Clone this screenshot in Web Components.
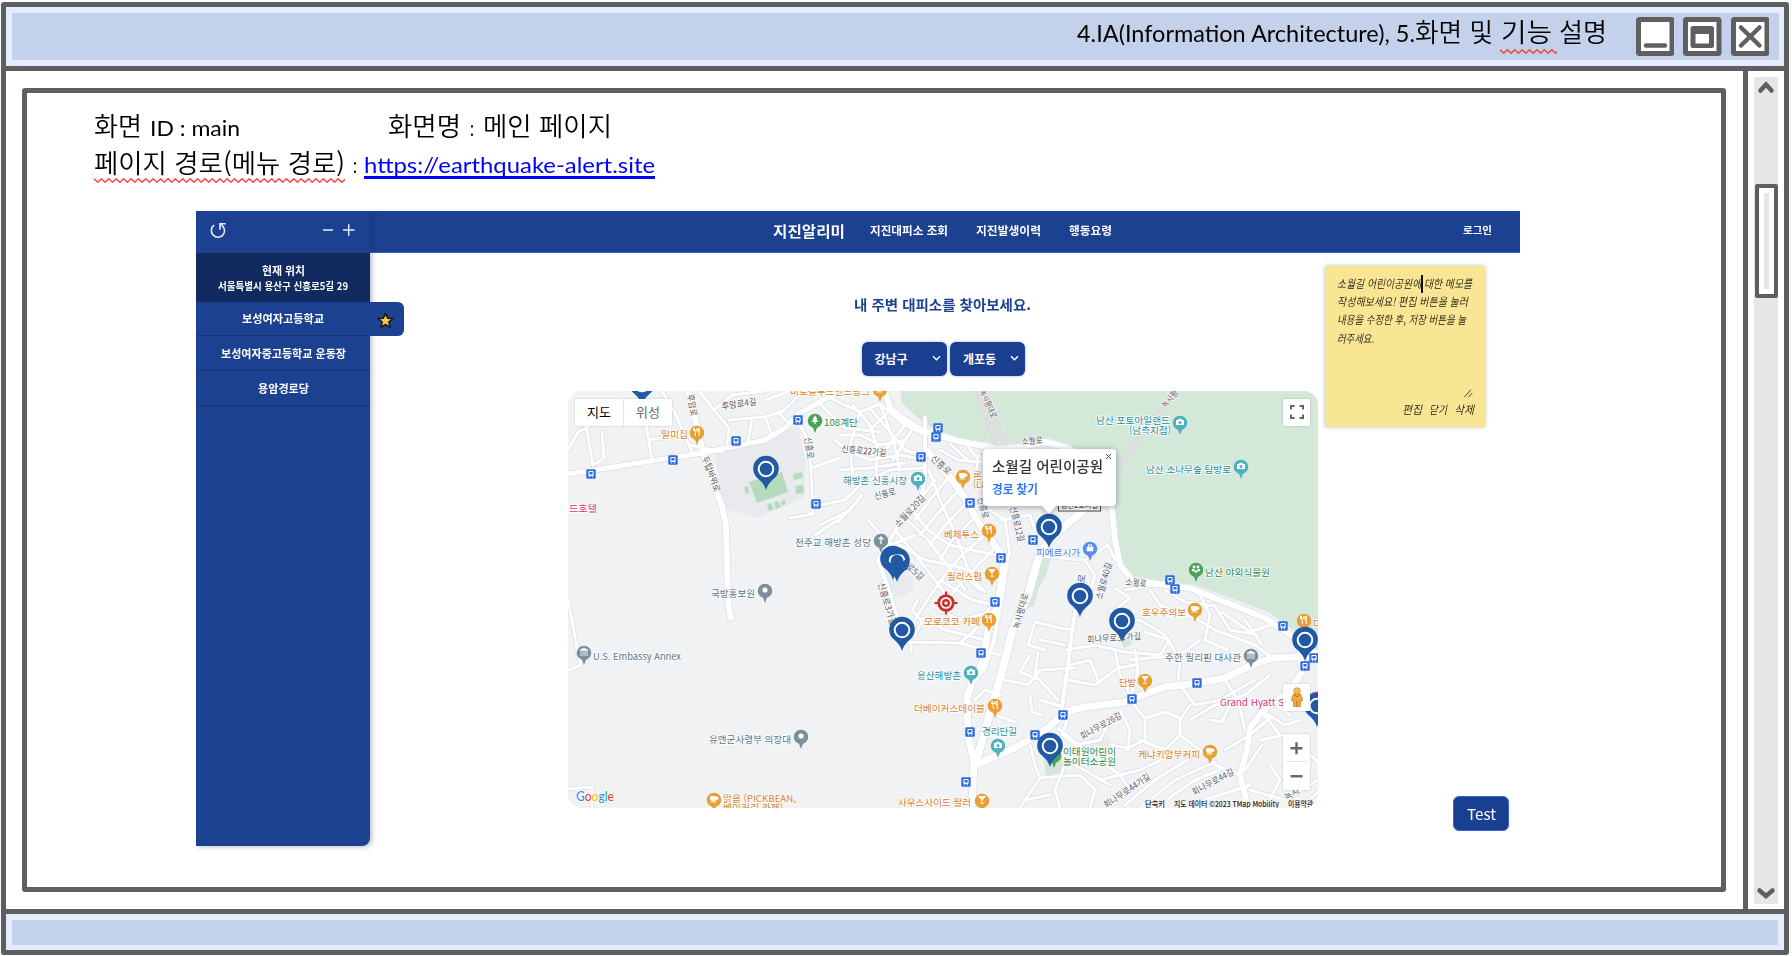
<!DOCTYPE html>
<html lang="ko">
<head>
<meta charset="utf-8">
<title>화면 설명 - 메인 페이지</title>
<style>
  html, body { margin: 0; height: 100%; overflow: hidden; }
  body { background: #f8faff; font-family: "Noto Sans CJK KR", "Noto Sans", sans-serif; }
</style>
</head>
<body>
<window-frame>
  <title-caption slot="title"></title-caption>
  <doc-meta></doc-meta>
  <quake-app></quake-app>
</window-frame>

<script>
const shadow = (el, html) => { el.attachShadow({ mode: "open" }).innerHTML = html; };
const define = (name, html) => customElements.define(name, class extends HTMLElement {
  constructor() { super(); shadow(this, html); }
});

/* ---------- window chrome ---------- */
define("window-frame", `
<style>
  :host { display: flex; flex-direction: column; box-sizing: border-box; width: 1788px; height: 953px; margin: 0; position: relative; left: 1px; top: 2px;
    border: 5px solid #5f5f5f; border-radius: 3px; background: #fff; }
  .bar { box-sizing: border-box; background: #c4d1eb; border: solid #e4ecfd; display: flex; align-items: center; justify-content: flex-end; flex: none; }
  .top { height: 59px; border-width: 6px 5px 6px 6px; }
  .bottom { height: 36px; border-width: 6px 6px 5px 6px; }
  .mid { flex: 1; display: flex; border: solid #5f5f5f; border-width: 5px 0; min-height: 0; }
  .page { flex: 1; padding: 17px 17px 17px 16px; display: flex; }
  .sheet { flex: 1; border: 5px solid #5f5f5f; border-radius: 3px; display: flex; flex-direction: column; min-width: 0; }
  window-buttons { margin-right: 10px; }
  slot[name=title] { display: block; }
</style>
<div class="bar top"><slot name="title"></slot><window-buttons></window-buttons></div>
<div class="mid"><div class="page"><div class="sheet"><slot></slot></div></div><scroll-track></scroll-track></div>
<div class="bar bottom"></div>`);

define("window-buttons", `
<style>
  :host { display: flex; gap: 9px; margin-left: 29px; }
  svg { display: block; width: 38.5px; height: 39px; }
</style>
<svg viewBox="0 0 38.5 39"><rect x="2.5" y="2.5" width="33.5" height="34" rx="1" fill="#fff" stroke="#5f5f5f" stroke-width="5"/><path d="M10 28.5H29" stroke="#5f5f5f" stroke-width="4.5" stroke-linecap="round"/></svg>
<svg viewBox="0 0 38.5 39"><rect x="2.5" y="2.5" width="33.5" height="34" rx="1" fill="#fff" stroke="#5f5f5f" stroke-width="5"/><rect x="7.5" y="9" width="23.5" height="22" rx="2.5" fill="#5f5f5f"/><rect x="12.5" y="17" width="13.5" height="9.5" fill="#fff"/></svg>
<svg viewBox="0 0 38.5 39"><rect x="2.5" y="2.5" width="33.5" height="34" rx="1" fill="#fff" stroke="#5f5f5f" stroke-width="5"/><path d="M10 10.500L28.5 28.500M28.5 10.500L10 28.500" stroke="#5f5f5f" stroke-width="4.5" stroke-linecap="round"/></svg>`);

define("scroll-track", `
<style>
  :host { display: flex; width: 36px; border-left: 5px solid #5f5f5f; padding: 6px 0 5px; justify-content: center; box-sizing: content-box; }
  .track { width: 24.5px; background: #e6e6e6; display: flex; flex-direction: column; align-items: center; margin-right: 0; }
  svg { width: 20px; height: 14px; flex: none; }
  .up { margin-top: 3px; } .down { margin-top: auto; margin-bottom: 3px; }
  .thumb { margin-top: 90px; box-sizing: border-box; width: 23px; height: 114px; flex: none; border: 4.5px solid #5f5f5f; background: #e6e6e6; box-shadow: inset 0 0 0 5px #fff; border-radius: 2px; }
</style>
<div class="track">
  <svg class="up" viewBox="0 0 20 14"><path d="M4.500 10.500L10 4.500L15.500 10.500" fill="none" stroke="#5f5f5f" stroke-width="4.500" stroke-linecap="round"/></svg>
  <div class="thumb"></div>
  <svg class="down" viewBox="0 0 20 14"><path d="M3.500 3.500L10 9L16.500 3.500" fill="none" stroke="#5f5f5f" stroke-width="4.500" stroke-linecap="round"/></svg>
</div>`);

/* Red spell-check wave under its content */
customElements.define("spell-mark", class extends HTMLElement {
  constructor() {
    super();
    shadow(this, `<style>
      :host { display: inline-block; position: relative; }
      svg { position: absolute; left: 0; bottom: var(--drop, 0px); width: 100%; height: 5px; overflow: hidden; }
    </style><slot></slot><svg><defs><pattern id="w" width="7.4" height="5" patternUnits="userSpaceOnUse"><path d="M-.5 .3L3.700 4.200L7.900 .3" fill="none" stroke="#ee4036" stroke-width="1.400"/></pattern></defs><rect width="100%" height="5" fill="url(#w)"/></svg>`);
  }
});

const docText = `
  .row { display: flex; align-items: baseline; color: #000; font-family: Lato, "Noto Sans CJK KR", sans-serif; line-height: 32px; height: 32px; white-space: nowrap; }
  .k { font-family: "Noto Sans CJK KR", sans-serif; font-size: 26px; font-weight: 350; }
  .l { font-size: 22px; }`;

define("title-caption", `
<style>${docText} :host { display: block; position: relative; top: -5.500px; } .l { font-size: 23px; }
 spell-mark { --drop: -2px; width: 57px; }</style>
<div class="row"><fit-text class="l" w="338">4.IA(Information Architecture), 5.</fit-text><fit-text class="k" w="78">화면 및</fit-text><spell-mark style="margin:0 2px 0 7px"><fit-text class="k" w="51" style="margin-left:1px">기능</fit-text></spell-mark><fit-text class="k" w="48">설명</fit-text></div>`);

define("doc-meta", `
<style>${docText}
  :host { display: block; padding: 15.500px 0 0 67px; height: 102px; box-sizing: border-box; }
  .second { margin-top: 5px; }
  a { color: #0000f5; text-decoration: none; border-bottom: 3px solid #0000f5; line-height: 23px; display: inline-block; height: 23px; }
  spell-mark { --drop: 0px; }
</style>
<div class="row"><fit-text class="k" w="48">화면</fit-text><fit-text class="l" w="90" style="margin-left:8px">ID : main</fit-text><fit-text class="k" w="73" style="margin-left:148px">화면명</fit-text><fit-text class="l" w="4" style="margin:0 9px 0 9px">:</fit-text><fit-text class="k" w="129">메인 페이지</fit-text></div>
<div class="row second"><spell-mark><fit-text class="k" w="251">페이지 경로(메뉴 경로)</fit-text></spell-mark><fit-text class="l" w="4" style="margin:0 7px 0 8px">:</fit-text><a href="#"><fit-text class="l" w="291">https://earthquake-alert.site</fit-text></a></div>`);

/* ---------- application ---------- */
define("quake-app", `
<style>
  :host { display: flex; position: relative; width: 1324px; height: 635px; margin-left: 169px; margin-top: 16px; background: #fff; }
  .main { flex: 1; display: flex; flex-direction: column; min-width: 0; }
  .body { display: flex; flex-direction: column; align-items: center; padding-left: 198px; width: 750px; }
  h1 { margin: 37px 0 0; height: 28px; line-height: 28px; font-size: 14px; color: #1c4190; font-weight: 700; align-self: flex-start; padding-left: 285.500px; }
  .picks { display: flex; gap: 3px; margin: 24px 0 15px; align-self: flex-start; padding-left: 293.500px; }
  side-list { z-index: 2; }
  memo-note { position: absolute; left: 1129px; top: 55px; }
  .test { position: absolute; left: 1257px; top: 585px; width: 56px; height: 35px; box-sizing: border-box; background: #1a3f91; border: 1px solid #2f66d8; border-radius: 6px; color: #fff; font: 400 15px/32px "Noto Sans CJK KR", sans-serif; padding: 0 0 0 13px; text-align: left; }
</style>
<side-list></side-list>
<div class="main">
  <app-nav></app-nav>
  <div class="body">
    <h1><fit-text w="177">내 주변 대피소를 찾아보세요.</fit-text></h1>
    <div class="picks"><drop-pick style="width:85.500px">강남구</drop-pick><drop-pick style="width:75px">개포동</drop-pick></div>
    <shelter-map></shelter-map>
  </div>
</div>
<memo-note></memo-note>
<button class="test"><fit-text w="29">Test</fit-text></button>`);

define("side-list", `
<style>
  :host { display: flex; flex-direction: column; width: 174px; height: 635px; background: #1c4190; border-radius: 0 0 8px 0; box-shadow: 2px 1px 5px rgba(20,40,90,.3); color: #fff; font-weight: 700; flex: none; clip-path: inset(0 -40px -10px 0); }
  .tools { height: 42px; display: flex; align-items: center; padding: 0 15px 4px 14px; box-sizing: border-box; }
  .tools svg { display: block; }
  .gap { flex: 1; }
  .here { height: 48.500px; background: #112a5f; display: flex; flex-direction: column; align-items: center; box-sizing: border-box; padding-top: 10px; line-height: 15px; font-size: 11px; }
  .here fit-text + fit-text { font-size: 10px; }
  .item { height: 34.700px; display: flex; align-items: center; justify-content: center; box-sizing: border-box; border-bottom: 1px solid #15336f; font-size: 11px; position: relative; }
  .star { position: absolute; left: 173px; top: 0; width: 34.500px; height: 34px; background: #1c4190; border-radius: 0 6px 6px 0; display: flex; align-items: center; justify-content: center; padding: 4px 2px 0 0; box-sizing: border-box; }
</style>
<div class="tools">
  <svg width="16" height="17" viewBox="0 0 16 17"><path d="M4.200 3.200A6.600 6.600 0 1 0 12.200 3.600M10 7.800V1.800H15.600" fill="none" stroke="#e9eefa" stroke-width="1.600"/><path d="M10 2.200L13 2L10.600 5z" fill="#e9eefa"/></svg>
  <span class="gap"></span>
  <svg width="33" height="14" viewBox="0 0 33 14"><path d="M1 7H11M21 7H32.500M26.700 1.300V12.700" stroke="#e9eefa" stroke-width="1.500"/></svg>
</div>
<div class="here"><fit-text w="43">현재 위치</fit-text><fit-text w="130">서울특별시 용산구 신흥로5길 29</fit-text></div>
<div class="item"><fit-text w="82">보성여자고등학교</fit-text><span class="star"><svg width="17" height="17" viewBox="0 0 17 17"><path d="M8.500 1.400L10.600 6.200L15.800 6.600L11.800 10L13.100 15.400L8.500 12.500L3.900 15.400L5.200 10L1.200 6.600L6.400 6.200Z" fill="#f8c64a" stroke="#1a1a1a" stroke-width="1.500" stroke-linejoin="round"/></svg></span></div>
<div class="item"><fit-text w="125">보성여자중고등학교 운동장</fit-text></div>
<div class="item"><fit-text w="51">용암경로당</fit-text></div>`);

define("app-nav", `
<style>
  :host { display: flex; align-items: center; height: 42px; box-sizing: border-box; background: #1c4190; border-bottom: 1px solid #3b5fae; color: #fff; padding: 0 28px 3px 402.500px; font-weight: 700; font-size: 11.500px; }
  .logo { font-size: 14.500px; margin-right: 25px; }
  .links { display: flex; gap: 28px; flex: 1; }
  .login { font-size: 10.500px; position: relative; top: -1px; }
</style>
<fit-text class="logo" w="72">지진알리미</fit-text>
<div class="links"><fit-text w="78">지진대피소 조회</fit-text><fit-text w="65">지진발생이력</fit-text><fit-text w="43">행동요령</fit-text></div>
<fit-text class="login" w="29">로그인</fit-text>`);

define("drop-pick", `
<style>
  :host { display: flex; align-items: center; justify-content: space-between; height: 33.500px; box-sizing: border-box; padding: 0 6px 0 13px; background: #1a3f91; color: #fff; border-radius: 6px; font-size: 12px; font-weight: 700; box-shadow: 0 0 3px rgba(30,60,140,.4); }
</style>
<slot></slot><svg width="9" height="7" viewBox="0 0 9 7"><path d="M1 1.300L4.500 4.800L8 1.300" fill="none" stroke="#fff" stroke-width="1.400"/></svg>`);

define("memo-note", `
<style>
  :host { display: flex; flex-direction: column; box-sizing: border-box; width: 160px; height: 160.500px; background: #f9e694; box-shadow: 0 0 4px rgba(90,90,110,.4); padding: 7.500px 11px 9px 11.500px; color: #1d1a10; font-size: 11.500px; line-height: 18.400px; font-weight: 350; }
  .txt { flex: 1; position: relative; display: flex; flex-direction: column; }
  .txt fit-text { height: 18.400px; font-style: italic; }
  .caret { position: absolute; left: 84.500px; top: 1px; width: 1.700px; height: 18px; background: #111; }
  .grip { align-self: flex-end; display: block; margin-right: 1px; }
  .acts { display: flex; justify-content: flex-end; gap: 7px; height: 18px; margin-top: 2px; font-style: italic; }
</style>
<div class="txt"><fit-text w="135">소월길 어린이공원에 대한 메모를</fit-text><fit-text w="131">작성해보세요! 편집 버튼을 눌러</fit-text><fit-text w="129">내용을 수정한 후, 저장 버튼을 눌</fit-text><fit-text w="37">러주세요.</fit-text><span class="caret"></span></div>
<svg class="grip" width="9" height="9" viewBox="0 0 9 9"><path d="M.5 8L7 .5M4.500 8L8.300 4" stroke="#444" stroke-width="1"/></svg>
<div class="acts"><fit-text w="20">편집</fit-text><fit-text w="18">닫기</fit-text><fit-text w="20">삭제</fit-text></div>`);

/* ---------- map ---------- */
const parks = [
  "900,391 902,403 918,418 930,427 958,437 998,444 1022,443 1050,438 1075,448 1100,470 1114,505 1118,540 1123,563 1134,576 1165,581 1192,584 1228,597 1268,612 1300,635 1318,650 1318,391",
  "1042,560 1052,555 1046,575 1038,590 1034,606 1026,608 1030,590",
  "1043,757 1062,755 1063,772 1046,776", "1121,638 1131,638 1132,645 1124,648"];
const campus = ["715,452 798,427 806,465 804,498 757,518 722,508", "883,572 912,576 914,590 898,598 886,592", "1090,737 1110,737 1110,755 1090,755"];
const pitches = ["749,482 782,472 788,492 757,503","793,474 802,472 803,478 794,480","795,486 803,485 804,493 796,494","744,487 748,486 749,493 746,494","767,504 771,503 774,509 769,511","774,502 778,501 781,507 776,509","781,501 785,500 786,504 782,506"];
const roads = [
 [6,"885,391 890,408 902,418 925,432 958,441 998,449 1022,447 1045,442 1068,448 1085,460 1104,490 1112,510 1115,540 1120,565 1132,580 1165,585 1190,588 1225,602 1265,618 1298,640 1318,655"],
 [5,"568,474 645,462 702,453 765,440 785,428 798,414 825,399 845,391"],
 [6,"688,391 695,418 703,452 712,482 722,506 726,525 728,602 731,618"],
 [7,"928,452 948,475 965,498 982,528 1000,552 1004,565 998,605 988,630 983,662 972,682 967,698 968,735 974,762 972,808"],
 [8,"1110,482 1090,505 1060,530 1040,552 1028,595 1012,632 1002,672 992,705 982,742 975,764"],
 [7,"978,764 1015,748 1048,728 1065,712 1085,707 1125,702 1142,695 1165,687 1198,683 1225,678 1252,665 1272,658 1318,656"],
 [6,"1300,650 1302,672 1290,690 1262,712 1250,728 1247,750 1240,775 1248,808"],
 [4,"925,418 925,478 921,498 897,528 885,548 878,560 888,588 898,620"],
 [4,"1076,608 1072,630 1068,665 1063,698 1062,712"],[4,"1008,555 1003,590 994,640 985,668 972,684"],
 [3,"1115,560 1108,545 1085,560 1060,558 1042,556"],[3,"568,450 578,432 600,420 640,408"],[3,"585,420 593,465"],[3,"602,432 604,458 595,464"],[3,"645,418 652,460"],[3,"662,391 676,415 692,452"],[3,"648,440 682,435"],[3,"700,392 714,410 729,428 727,444"],[3,"690,445 722,452"],[3,"714,410 732,395 765,391"],[3,"729,420 765,417 783,411 800,395"],[3,"752,418 748,442"],[3,"765,417 772,435"],[3,"778,412 790,425"],[3,"765,400 790,391"],
 [3,"800,425 808,440 811,470 813,514 790,518"],[3,"811,468 840,458"],[3,"820,505 845,500 860,485 890,470 922,468"],[3,"840,435 860,435 880,445 905,440"],[3,"835,440 850,452 870,460 900,455 925,460"],[3,"853,405 870,425 878,450 875,485"],[3,"830,398 860,412 880,404 905,425 925,435"],[3,"818,402 845,428 880,432"],[3,"860,412 850,445 853,480"],[3,"870,408 905,450 922,455"],[3,"880,404 893,440 900,470"],[3,"890,410 870,430"],[3,"905,425 885,450"],[3,"915,425 893,460"],[3,"840,470 870,468 905,463"],[3,"820,525 850,510 862,495"],[3,"838,522 858,500"],[3,"815,535 845,515"],
 [3,"929,470 940,500 958,540 970,575 985,592"],[3,"935,480 912,510 928,530 950,545 1000,556"],[3,"905,518 928,540 945,562 965,590"],[3,"895,530 918,558 935,580 950,600"],[3,"948,478 930,500 915,520"],[3,"957,492 938,513 920,535"],[3,"965,505 945,525 930,545"],[3,"972,520 952,540 940,560"],[3,"985,535 962,555 945,575 930,596 916,618"],[3,"995,548 975,568 955,590 940,612"],[3,"880,552 900,545 925,560 955,566 998,580"],[3,"890,545 915,535"],[3,"868,520 890,545"],[3,"940,450 958,460 978,462 975,480 990,500"],[3,"950,444 970,462"],[3,"978,455 1000,470 1008,500 1020,545"],[3,"990,510 1005,520 1010,555"],[3,"1000,520 1030,515 1035,530"],[3,"965,442 980,462 1000,458"],
 [3,"918,600 912,610 922,622 915,635 902,640"],[3,"905,642 960,643 1000,655"],[3,"911,643 911,652"],[3,"930,605 960,620 990,612"],[3,"922,618 945,630 985,640"],[3,"960,643 975,630 995,600"],[3,"940,580 972,600 995,605"],[3,"958,570 980,590"],[3,"975,700 985,690 1000,695"],[3,"995,715 1015,722"],[3,"1005,680 1028,685 1040,670 1075,668"],[3,"1035,622 1060,628 1075,630"],[3,"1035,622 1028,645 1045,650"],[3,"1030,655 1020,672 1040,680"],[3,"1040,640 1065,645"],[3,"1038,652 1035,675 1058,700"],[3,"1030,695 1032,712 1042,715"],[3,"1040,700 1060,706"],
 [3,"1066,650 1095,645 1125,652 1160,655 1170,640 1145,632"],[3,"1068,680 1095,685 1118,668 1135,665"],[3,"1070,665 1090,660 1098,680"],[3,"1110,610 1120,622 1140,620 1165,635"],[3,"1085,560 1095,575 1088,600 1080,615"],[3,"1115,588 1130,598 1118,608"],[3,"1125,590 1155,585"],[3,"1150,590 1160,605 1195,618 1215,630 1255,645 1275,660"],[3,"1165,590 1185,602 1215,606 1230,630 1258,635"],[3,"1200,595 1210,615 1205,640 1228,650"],[3,"1135,650 1138,670 1130,700"],[3,"1115,650 1120,675 1130,695"],[3,"1130,660 1180,655 1200,640"],[3,"1165,635 1180,660 1178,680"],[3,"1222,612 1250,632 1270,625"],[3,"1245,620 1262,645"],[3,"1225,680 1238,700 1245,730"],[3,"1180,685 1195,705 1220,700 1255,680"],[3,"1190,720 1215,705 1245,695 1270,675"],
 [3,"1070,712 1062,735 1085,750 1075,765 1110,785"],[3,"1058,728 1085,750"],[3,"1030,745 1035,765 1040,778 1025,800 1020,808"],[3,"1040,778 1080,775 1095,790 1090,808"],[3,"1065,765 1055,790 1060,808"],[3,"1025,800 1050,795"],[3,"1100,760 1120,775 1130,790"],[3,"1130,700 1145,718 1145,740 1128,748 1110,745"],[3,"1145,718 1165,712 1180,718 1180,735 1165,750 1140,740"],[3,"1180,720 1190,705"],[3,"1180,735 1200,750 1215,765 1240,775"],[3,"1125,805 1155,780 1195,755"],[3,"1140,808 1175,780 1215,762"],[3,"1155,808 1195,780 1220,770"],[3,"1100,780 1140,770 1165,758"],[3,"1180,805 1205,800 1250,785"],[3,"1210,720 1222,722 1230,705"],[3,"1225,750 1250,735 1270,718"],[3,"1260,710 1285,725 1300,720"],[3,"1270,700 1290,715"],[3,"1260,740 1285,735"],[3,"1245,770 1262,745"],[3,"1265,808 1280,780 1270,765"],[3,"1250,790 1285,800 1318,780"],[3,"1280,735 1262,712"],[3,"1310,755 1318,762"],[3,"1300,808 1318,792"],[3,"1110,720 1100,740 1075,745"],[3,"1120,710 1130,730 1128,750"],
 [3,"568,600 572,620 577,648 581,665 568,670"],[3,"568,789 592,787 592,808"]];
const tunnels = [[6,"977,391 996,446"],[6,"985,391 1005,446"],[7,"1176,391 1118,467"]];
const roadNames = [["후암로",692,405,80,22],["후암로4길",739,404,-8,35],["두텁바위로",711,474,70,37],["신흥로",809,448,82,22],["신흥로22가길",864,451,6,45],["신흥로",941,465,42,24],["신흥로",885,494,-15,22],["소월로20길",910,511,-47,40],["로5길",915,572,40,20],["신흥로3가길",887,604,73,44],["신흥로",983,508,75,22],["신흥로12길",1017,524,76,36],["소월로",1032,441,-4,21],["녹사평대로",988,404,66,30],["녹사평",1170,399,-50,20],["녹사평대로",1021,611,-75,36],["소월로",1136,583,6,21],["소월로40길",1104,581,-74,38],["회나무로",1080,592,-82,36],["회나무로32가길",1114,638,-4,54],["회나무로26길",1101,726,-29,46],["회나무로44가길",1127,791,-34,54],["회나무로44길",1213,782,-28,46],["녹사",1292,794,-30,16]];
/* icon, pin x, pin y, tone, labels: [text, x, baseline, width] */
const C = { o:["#e8a033","#d9822b"], t:["#4fb0c0","#2b8f9f"], g:["#4aa35a","#2f8a45"], s:["#7b8f9c","#5f7584"], b:["#5b8def","#3f7de0"], p:["#d84a83","#d63a78"] };
const places = [
 ["fork",697,432,"o",["일미집",661,438,27]],["cup",880,389,"o",["비로컬푸드앤드링크",790,395,80]],["tree",815,420,"g",["108계단",824,426,34]],["cam",918,478,"t",["해방촌 신흥시장",843,484,64]],
 ["cup",963,476,"o",["론",973,479,9],["(La",973,488,13]],["fork",989,530,"o",["베제투스",944,538,35]],["glass",992,573,"o",["필리스펍",947,580,35]],["fork",989,619,"o",["모로코코 카페",924,625,56]],
 ["cam",971,672,"t",["용산해방촌",917,679,44]],["fork",995,705,"o",["더베이커스테이블",914,712,71]],["cam",998,745,"t",["경리단길",982,735,35]],["glass",982,800,"o",["사우스사이드 팔러",898,806,73]],
 ["bag",1090,548,"b",["피에르시가",1036,556,44]],["cross",881,540,"s",["천주교 해방촌 성당",795,546,76]],["dot",765,590,"s",["국방홍보원",711,597,44]],["bank",584,652,"s",["U.S. Embassy Annex",593,660,88]],
 ["dot",801,736,"s",["유엔군사령부 의장대",709,743,82]],["cup",714,799,"o",["맑음 (PICKBEAN,",723,802,73],["베이커리 카페)",723,811,60]],["cam",1180,422,"t",["남산 포토아일랜드",1096,424,74],["(남측지점)",1129,434,42]],
 ["cam",1241,466,"t",["남산 소나무숲 탐방로",1146,473,85]],["flower",1196,569,"g",["남산 야외식물원",1205,576,65]],["cup",1195,609,"o",["호우주의보",1142,616,44]],["fork",1304,620,"o",["더",1313,627,9]],
 ["bank",1251,655,"s",["주한 필리핀 대사관",1165,661,76]],["glass",1145,680,"o",["단밤",1119,686,17]],["cup",1210,751,"o",["케냐키암부커피",1138,758,62]],["tree",1054,755,"g",["이태원어린이",1063,755,53],["놀이터소공원",1063,764.5,53]],
 ["bag",1316,698,"p",["Grand Hyatt S",1220,706,64]]];
const glyph = {
  fork:'<path d="M-2.500-4V-1.500Q-2.500 0-1.700 0V4M-3.400-4V-1.500H0V-4M2.200 4V-4Q.8-3 1 0H2.200" fill="none" stroke="#fff" stroke-width="1"/>',
  cup:'<path d="M-3.500-2.500H2V.5Q2 2-.5 2T-3.500 .5ZM-3.500 3H2.500M2-1.800H4V.3H2" fill="#fff" stroke="#fff" stroke-width=".8"/>',
  glass:'<path d="M-3.200-3.500H3.200L0 .3ZM0 0V3M-2 3.300H2" fill="#fff" stroke="#fff" stroke-width=".8"/>',
  cam:'<path d="M-4-2H-2L-1.300-3.300H1.300L2-2H4V3H-4Z" fill="#fff"/><circle r="1.500" cy=".4" fill="#4fb0c0"/>',
  tree:'<path d="M0-4.500L2.500-1H1.500L3.300 2H.6V4H-.6V2H-3.300L-1.500-1H-2.500Z" fill="#fff"/>',
  flower:'<g fill="#fff"><circle cx="-2" cy="-2" r="1.400"/><circle cx="2" cy="-2" r="1.400"/><circle cx="-2.700" cy="1.200" r="1.400"/><circle cx="2.700" cy="1.200" r="1.400"/><circle cy="2.600" r="1.400"/></g>',
  cross:'<path d="M0-4.200V4.200M-2.600-1.500H2.600" stroke="#fff" stroke-width="1.300"/>',
  bank:'<path d="M-4-1.800L0-4L4-1.800ZM-3 2V-1M-1-1V2M1-1V2M3-1V2M-4 3H4" fill="#fff" stroke="#fff" stroke-width=".8"/>',
  bag:'<path d="M-3.300-1.200H3.300V3.300H-3.300Z" fill="#fff"/><path d="M-1.500-1V-3.200H1.500V-1" fill="none" stroke="#fff"/>',
  dot:'<circle r="2.600" fill="#fff"/>' };
const stops = [[591,474],[673,460],[736,441],[798,420],[816,504],[938,428],[936,437],[921,457],[970,503],[1033,540],[1001,558],[995,602],[981,653],[970,732],[966,782],[1063,715],[1035,735],[1132,699],[1197,683],[1283,626],[1305,666],[1314,658],[1170,580],[1175,589]];
const shelters = [[642,384],[766,469],[893,559],[897,561],[1049,527],[902,630],[1080,596],[1122,621],[1305,640],[1050,746],[1317,706]];

const mapSvg = () => {
  const poly = (list, fill) => list.map(p => `<polygon points="${p}" fill="${fill}"/>`).join("");
  const line = (list, stroke, extra) => list.map(([w, p]) => `<polyline points="${p}" stroke="${stroke}" stroke-width="${w + extra}"/>`).join("");
  const fit = (t, w) => `textLength="${w}" lengthAdjust="spacingAndGlyphs">${t}</text>`;
  return `<svg class="base" viewBox="568 391 750 417" width="750" height="417">
  <rect x="568" y="391" width="750" height="417" fill="#f0f2f4"/>
  ${poly(parks, "#d3e8d9")}${poly(campus, "#e8eaee")}${poly(pitches, "#b5dbba")}
  <g fill="none" stroke-linecap="round" stroke-linejoin="round">${line(tunnels, "#dcdee0", 0)}${line(roads, "#dadde3", 1.4)}${line(roads, "#fff", 0)}</g>
  <g font-size="9" fill="#54585d" stroke="#fff" stroke-width="1.600" paint-order="stroke" text-anchor="middle">
  ${roadNames.map(([t, x, y, r, w]) => `<text transform="translate(${x} ${y}) rotate(${r})" y="3" ${fit(t, w)}`).join("")}</g>
  ${stops.map(([x, y]) => `<g transform="translate(${x} ${y})"><rect x="-4.700" y="-4.700" width="9.400" height="9.400" rx="1.200" fill="#2f6be0"/><path d="M-2.100-2.500H2.100V1.600H-2.100Z" fill="#2f6be0" stroke="#fff" stroke-width="1"/><path d="M-2 .9H2" stroke="#fff" stroke-width=".8"/><path d="M-2 2.900H-1M1 2.900H2" stroke="#fff" stroke-width="1"/></g>`).join("")}
  <g><rect x="1058.500" y="498" width="42" height="13" fill="#fff" stroke="#444" stroke-width="1"/><text x="1061" y="508" font-size="8.500" fill="#444" ${fit("남산2호터널", 37)}</g>
  <text x="569" y="512" font-size="9.500" fill="#d63a6e" stroke="#fff" stroke-width="1.500" paint-order="stroke" ${fit("드호텔", 28)}
  ${places.map(([ic, x, y, tone, ...ls]) => `<g transform="translate(${x} ${y})"><path d="M0 13L-2 7.800A7.200 7.200 0 1 1 2 7.800Z" fill="${C[tone][0]}"/>${glyph[ic]}</g>` +
    ls.map(([t, lx, ly, w]) => `<text x="${lx}" y="${ly}" font-size="9.500" font-weight="400" fill="${C[tone][1]}" stroke="#fff" stroke-width="1.800" stroke-opacity=".85" paint-order="stroke" ${fit(t, w)}`).join("")).join("")}
  <g transform="translate(946 603)" fill="none" stroke="#cb302b"><circle r="7.300" stroke-width="2.800"/><circle r="2.800" stroke-width="2.400"/><path d="M0-11.500V-7M0 7V11.500M-11.500 0H-7M7 0H11.500" stroke-width="2.200"/></g>
  ${shelters.map(([x, y]) => `<g transform="translate(${x} ${y})"><path d="M0 21Q-1.500 15-8 9.500A12.800 12.800 0 1 1 8 9.500Q1.500 15 0 21Z" fill="#2159a4"/><circle r="7.300" fill="none" stroke="#fff" stroke-width="2"/></g>`).join("")}
  <path d="M885 552H907V556Q897 552 887 557ZM886 560Q897 568 907 558L907 570H887Z" fill="#2159a4"/>
  <text x="576" y="801" font-family="Lato, sans-serif" font-size="13" font-weight="500" stroke="#fff" stroke-width="1.500" paint-order="stroke" textLength="38" lengthAdjust="spacingAndGlyphs"><tspan fill="#4285f4">G</tspan><tspan fill="#ea4335">o</tspan><tspan fill="#fbbc05">o</tspan><tspan fill="#4285f4">g</tspan><tspan fill="#34a853">l</tspan><tspan fill="#ea4335">e</tspan></text>
  <rect x="1142" y="799" width="176" height="9" fill="#f5f5f5" opacity=".7"/>
  <g font-size="7.500" font-weight="500" fill="#222"><text x="1145" y="806.500" ${fit("단축키", 20)}<text x="1174" y="806.500" ${fit("지도 데이터 ©2023 TMap Mobility", 105)}<text x="1288" y="806.500" ${fit("이용약관", 25)}</g>
  </svg>`;
};

define("shelter-map", `
<style>
  :host { display: block; position: relative; width: 750px; height: 417px; border-radius: 14px; overflow: hidden; font-family: "Noto Sans CJK KR", sans-serif; }
  .base { display: block; }
  .ctl { position: absolute; background: #fff; box-shadow: 0 0 2px rgba(0,0,0,.25); border-radius: 1.500px; display: flex; }
  .type { left: 7px; top: 8px; width: 97px; height: 27px; font-size: 13px; line-height: 26px; color: #666; }
  .type span { flex: 1; text-align: center; display: block; }
  .type .on { color: #000; border-right: 1px solid #e6e6e6; }
  .full { left: 715px; top: 8px; width: 27px; height: 27px; align-items: center; justify-content: center; }
  .peg { left: 715px; top: 293px; width: 27px; height: 27px; align-items: center; justify-content: center; }
  .zoom { left: 715px; top: 343px; width: 27px; height: 56px; flex-direction: column; }
  .zoom svg { flex: 1; } .zoom hr { width: 21px; margin: 0 auto; border: 0; border-top: 1px solid #e4e4e4; }
  place-card { position: absolute; left: 415px; top: 58px; }
</style>
${mapSvg()}
<place-card><span slot="name">소월길 어린이공원</span><span slot="route">경로 찾기</span></place-card>
<div class="ctl type"><span class="on">지도</span><span>위성</span></div>
<div class="ctl full"><svg width="14" height="14" viewBox="0 0 14 14"><path d="M1 4.500V1H4.500M9.500 1H13V4.500M13 9.500V13H9.500M4.500 13H1V9.500" fill="none" stroke="#666" stroke-width="2"/></svg></div>
<div class="ctl peg"><svg width="14" height="21" viewBox="0 0 14 21"><path d="M3.500 7H10.500Q12.500 10 12.500 14L10.500 13.500V19.500H3.500V13.500L1.500 14Q1.500 10 3.500 7Z" fill="#f2a93b" stroke="#b98434" stroke-width=".7"/><circle cx="7" cy="4" r="3.300" fill="#f6b94a" stroke="#b98434" stroke-width=".6"/><path d="M7 14V19M4.500 8L7 10L9.500 8" fill="none" stroke="#a86e1c"/></svg></div>
<div class="ctl zoom"><svg viewBox="0 0 27 27"><path d="M7.500 14H19.500M13.500 8V20" stroke="#666" stroke-width="2.400"/></svg><hr><svg viewBox="0 0 27 27"><path d="M7.500 14H19.500" stroke="#666" stroke-width="2.400"/></svg></div>`);

define("place-card", `
<style>
  :host { display: block; box-sizing: border-box; width: 133px; height: 57px; padding: 6px 9px; background: #fff; border-radius: 4px; filter: drop-shadow(0 1px 3px rgba(0,0,0,.35)); }
  .n { display: block; font-size: 14.500px; line-height: 22px; color: #333; font-weight: 500; height: 24px; }
  .r { display: block; font-size: 12px; line-height: 20px; color: #3478f0; font-weight: 700; }
  .tip { position: absolute; left: 58px; top: 56.500px; }
  .x { position: absolute; right: 4px; top: 4px; }
</style>
<fit-text class="n" w="111"><slot name="name"></slot></fit-text><fit-text class="r" w="46"><slot name="route"></slot></fit-text>
<svg class="tip" width="16" height="9" viewBox="0 0 16 9"><path d="M0 0H16L8 9Z" fill="#fff"/></svg>
<svg class="x" width="7" height="7" viewBox="0 0 7 7"><path d="M1 1L6 6M6 1L1 6" stroke="#555" stroke-width="1"/></svg>`);

/* Sets its text to an exact width; defined last so that every container is laid out. */
customElements.define("fit-text", class extends HTMLElement {
  connectedCallback() {
    if (this.shadowRoot) return;
    const w = +this.getAttribute("w");
    shadow(this, `<style>:host { display: inline-block; width: ${w}px; white-space: nowrap; } span { display: inline-block; transform-origin: 0 50%; }</style><span><slot></slot></span>`);
    const s = this.shadowRoot.querySelector("span");
    const natural = s.getBoundingClientRect().width;
    if (natural) s.style.transform = `scaleX(${w / natural})`;
  }
});
</script>
</body>
</html>
